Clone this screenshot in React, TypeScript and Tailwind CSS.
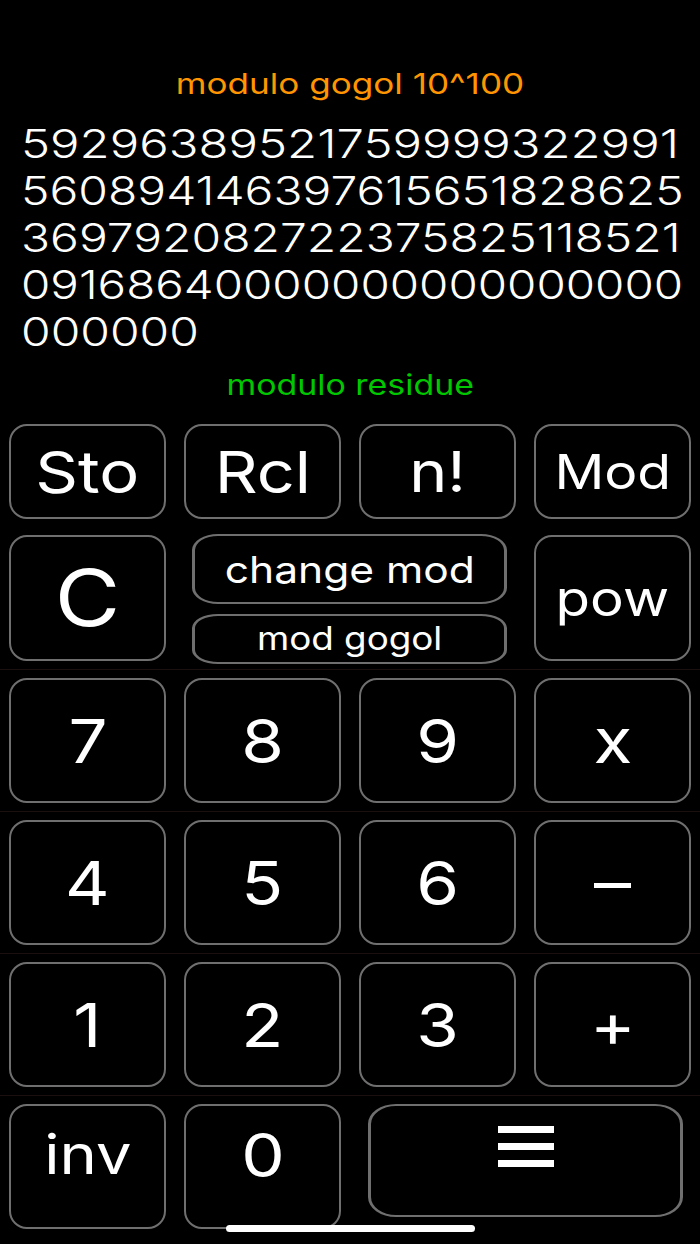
import type { ReactNode } from 'react'

const font = "font-['Inter','Noto_Sans',sans-serif]"

// each wrapped line of the residue, with its own stretch so the lines end flush
const digitLines = [
  { text: '59296389521759999322991', cls: 'scale-x-[1.258]' },
  { text: '560894146397615651828625', cls: 'scale-x-[1.23]' },
  { text: '369792082722375825118521', cls: 'scale-x-[1.23]' },
  { text: '09168640000000000000000', cls: 'scale-x-[1.218]' },
  { text: '000000', cls: 'scale-x-[1.23]' },
]

function Key({ children, className = '' }: { children: ReactNode; className?: string }) {
  return (
    <div className="px-[9px] py-[8px]">
      <button
        className={`flex h-full w-full items-center justify-center rounded-[18px] border-2 border-[#6f6f6f] bg-black text-white ${className}`}
      >
        {children}
      </button>
    </div>
  )
}

function Label({ children, size }: { children: ReactNode; size: string }) {
  return <span className={`inline-block scale-x-[1.15] leading-none ${size}`}>{children}</span>
}

export default function App() {
  return (
    <div className={`relative flex h-[1244px] w-[700px] flex-col overflow-hidden bg-black ${font}`}>
      <div className="mt-[67px] text-center text-[29px] leading-[34px] text-[#ff9500]">
        <span className="inline-block scale-x-[1.21]">modulo gogol 10^100</span>
      </div>

      <div className="mt-[19px] px-[21px] text-[39px] font-light leading-[47px] text-white">
        {digitLines.map((line, i) => (
          <div key={i} className="whitespace-nowrap">
            <span className={`inline-block origin-left ${line.cls}`}>{line.text}</span>
          </div>
        ))}
      </div>

      <div className="mt-[13px] text-center text-[28px] leading-[34px] text-[#00c800]">
        <span className="inline-block scale-x-[1.21]">modulo residue</span>
      </div>

      {/* keypad */}
      <div className="mt-[14px] grid h-[111px] grid-cols-4">
        <Key><Label size="text-[58px]">Sto</Label></Key>
        <Key><Label size="text-[58px]">Rcl</Label></Key>
        <Key><Label size="text-[56px]">n!</Label></Key>
        <Key><Label size="text-[48px]">Mod</Label></Key>
      </div>

      <div className="grid h-[142px] grid-cols-4">
        <Key><Label size="text-[78px]">C</Label></Key>
        <div className="col-span-2 flex flex-col gap-[10px] pb-[5px] pl-[17px] pr-[18px] pt-[7px]">
          <button className="flex h-[70px] items-center justify-center rounded-[26px/16px] border-x-[3px] border-y-2 border-[#6f6f6f] text-white">
            <Label size="text-[37px]">change mod</Label>
          </button>
          <button className="flex h-[50px] items-center justify-center rounded-[26px/14px] border-x-[3px] border-y-2 border-[#6f6f6f] text-white">
            <Label size="text-[32px]">mod gogol</Label>
          </button>
        </div>
        <Key><Label size="text-[49px]">pow</Label></Key>
      </div>

      <div className="grid h-[142px] grid-cols-4 border-t border-[#1c0f0f]">
        <Key><Label size="text-[60px]">7</Label></Key>
        <Key><Label size="text-[60px]">8</Label></Key>
        <Key><Label size="text-[60px]">9</Label></Key>
        <Key><Label size="text-[62px]">x</Label></Key>
      </div>

      <div className="grid h-[142px] grid-cols-4 border-t border-[#1c0f0f]">
        <Key><Label size="text-[60px]">4</Label></Key>
        <Key><Label size="text-[60px]">5</Label></Key>
        <Key><Label size="text-[60px]">6</Label></Key>
        <Key>
          <span aria-label="minus" className="mt-[5px] block h-[5px] w-[37px] bg-white" />
        </Key>
      </div>

      <div className="grid h-[142px] grid-cols-4 border-t border-[#1c0f0f]">
        <Key><Label size="text-[60px]">1</Label></Key>
        <Key><Label size="text-[60px]">2</Label></Key>
        <Key><Label size="text-[60px]">3</Label></Key>
        <Key><Label size="text-[60px]">+</Label></Key>
      </div>

      <div className="grid h-[142px] grid-cols-4 border-t border-[#1c0f0f]">
        <Key className="pb-[24px]"><Label size="text-[55px]">inv</Label></Key>
        <Key className="pb-[24px]"><Label size="text-[60px]">0</Label></Key>
        <div className="col-span-2 pb-[20px] pl-[18px] pr-[17px] pt-[8px]">
          <button className="flex h-full w-full flex-col items-center justify-center gap-[10px] rounded-[28px/20px] border-x-[3px] border-y-2 border-[#6f6f6f] pb-[28px]">
            <span className="block h-[7px] w-[56px] bg-white" />
            <span className="block h-[7px] w-[56px] bg-white" />
            <span className="block h-[7px] w-[56px] bg-white" />
          </button>
        </div>
      </div>

      <div className="absolute bottom-[12px] left-[226px] h-[7px] w-[249px] rounded-full bg-white" />
    </div>
  )
}
